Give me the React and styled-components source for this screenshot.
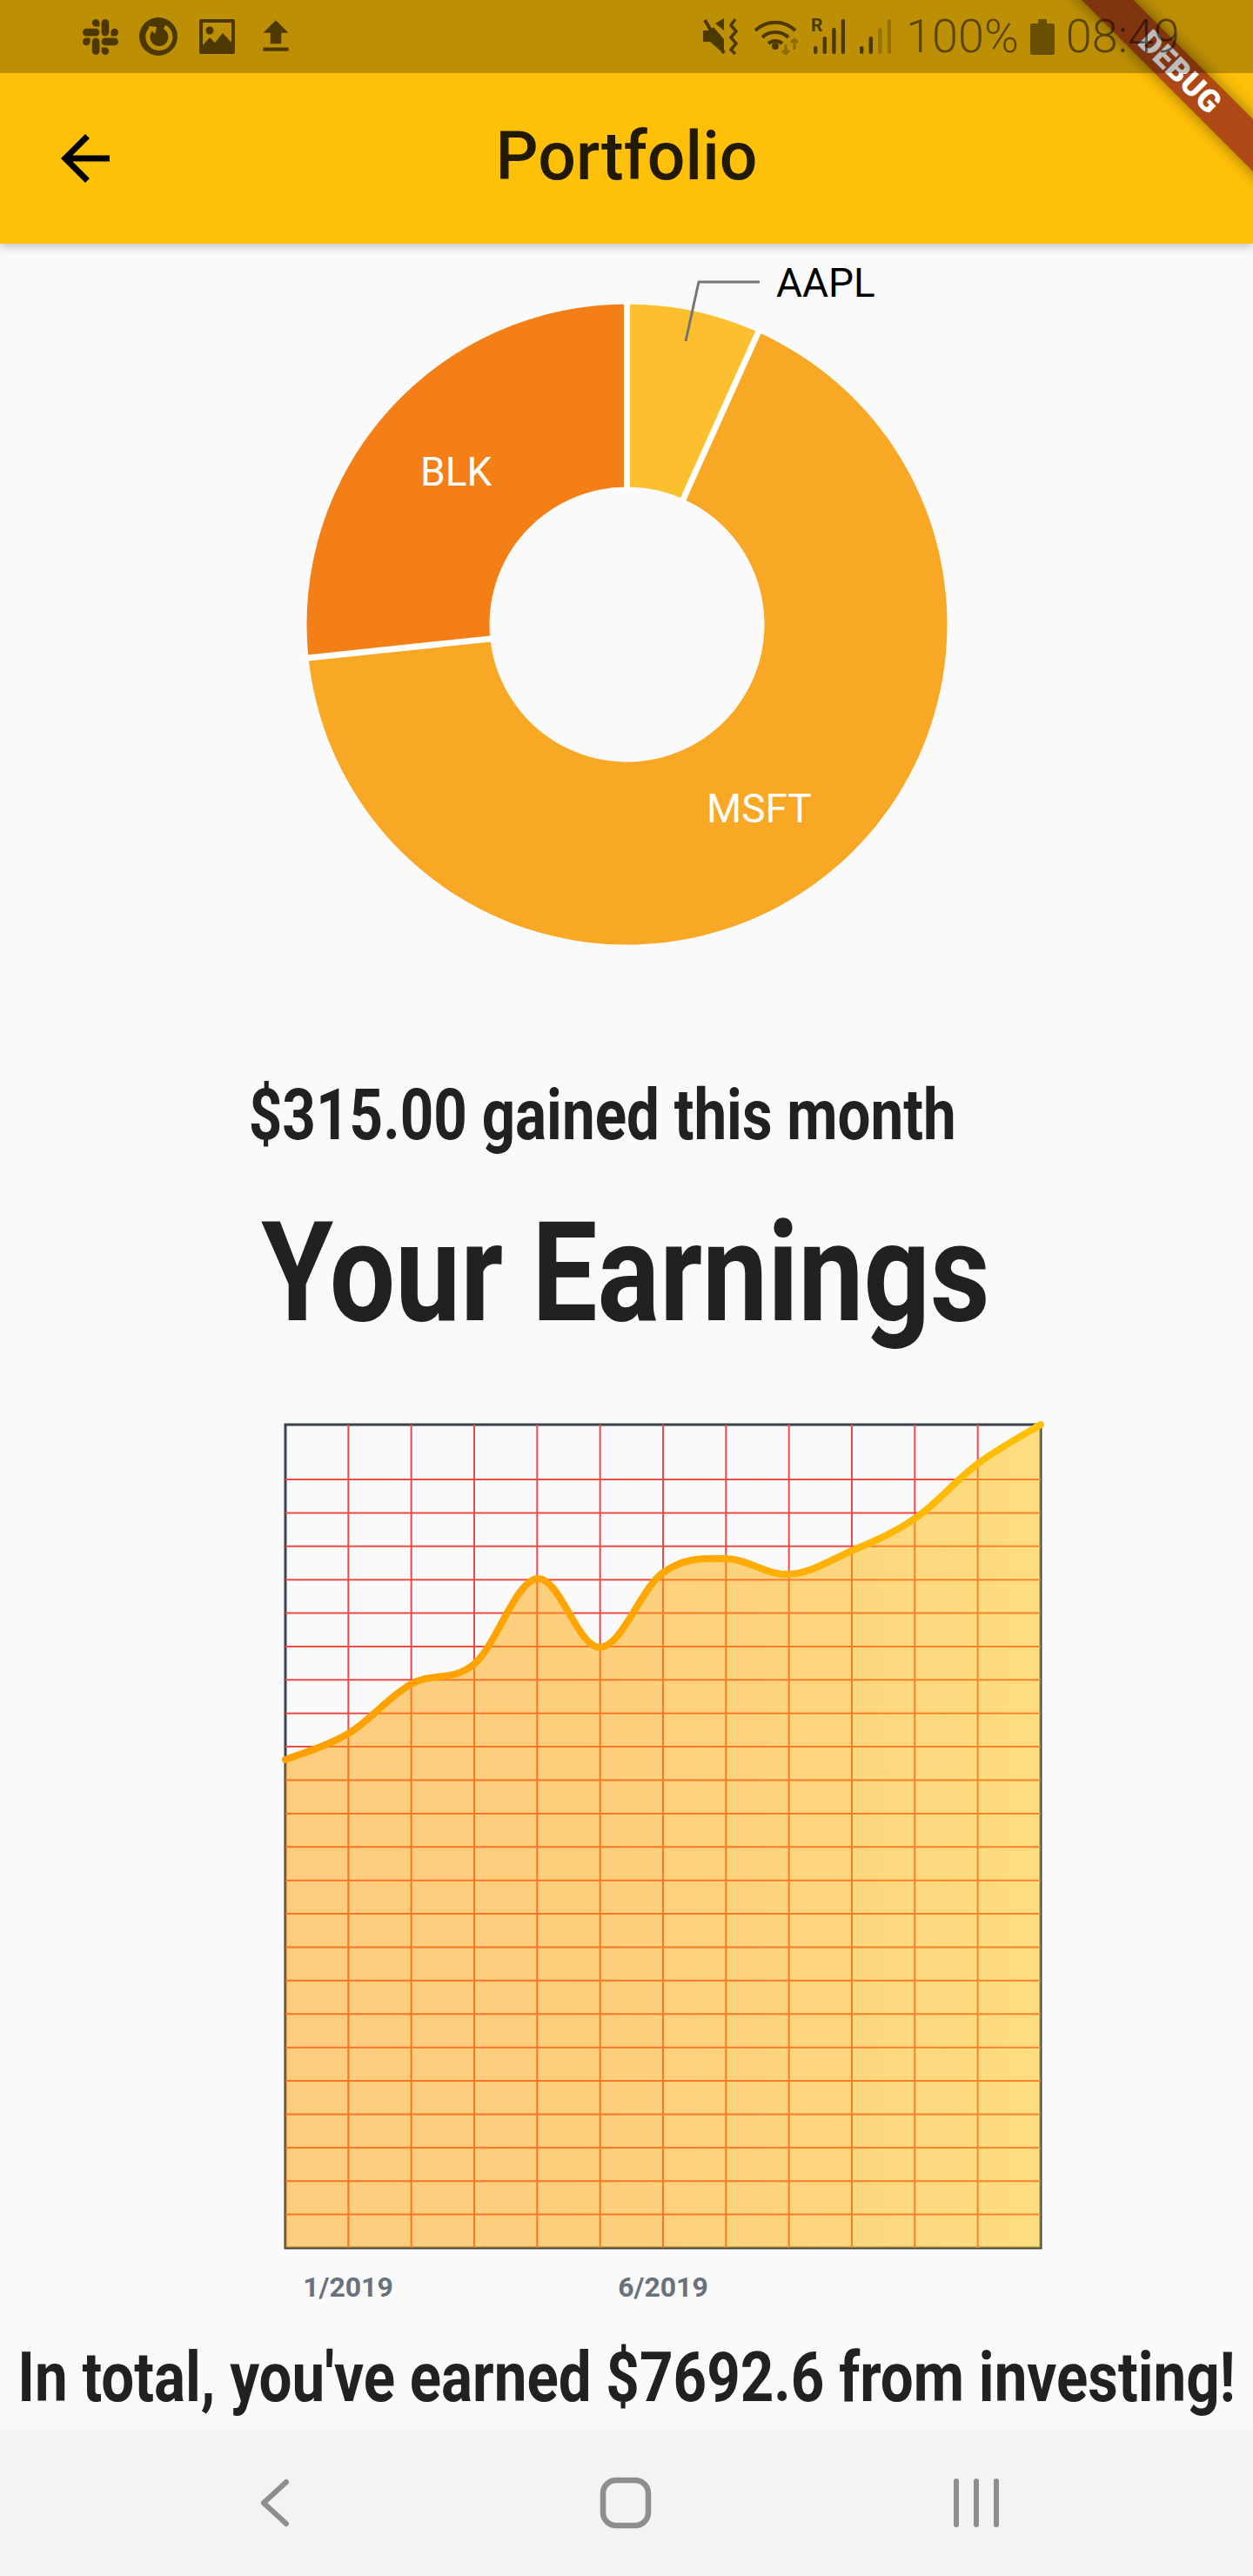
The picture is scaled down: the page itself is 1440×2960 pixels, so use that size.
import React from 'react'
import styled, { createGlobalStyle } from 'styled-components'
import { MdArrowBack, MdFileUpload } from 'react-icons/md'
import { SiSlack } from 'react-icons/si'

const GlobalStyle = createGlobalStyle`
  html, body {
    margin: 0;
    padding: 0;
    background: #fafafa;
    font-family: Roboto, "Liberation Sans", sans-serif;
  }
`

const Page = styled.div`
  position: relative;
  width: 1440px;
  height: 2960px;
  display: flex;
  flex-direction: column;
  overflow: hidden;
  background: #fafafa;
`

const Header = styled.header`
  position: relative;
  z-index: 2;
  height: 280px;
  flex: none;
  background: #ffc107;
  box-shadow: 0 4px 10px rgba(0, 0, 0, 0.22);
  overflow: hidden;
`

const DebugBanner = styled.div`
  position: absolute;
  left: 1106px;
  top: 62px;
  width: 500px;
  height: 42px;
  transform: rotate(45deg);
  background: rgba(140, 20, 25, 0.7);
  box-shadow: 0 0 18px rgba(0, 0, 0, 0.45);
  display: flex;
  justify-content: center;
  align-items: center;
  color: #fff;
  font-weight: 900;
  font-size: 36px;
  line-height: 42px;
  letter-spacing: 0.5px;
`

const StatusBar = styled.div`
  position: relative;
  z-index: 1;
  height: 84px;
  padding: 0 84px 0 95px;
  box-sizing: border-box;
  display: flex;
  align-items: center;
  justify-content: space-between;
  background: rgba(0, 0, 0, 0.26);
  color: #4d3900;
`

const StatusGroup = styled.div`
  display: flex;
  align-items: center;
`

const StatusSlot = styled.span`
  display: flex;
  margin-left: ${(p) => p.$gap || 0}px;
`

const StatusText = styled.span`
  margin-left: ${(p) => p.$gap || 0}px;
  font-size: 54px;
  font-weight: 300;
  line-height: 84px;
  color: rgba(0, 0, 0, 0.52);
  white-space: nowrap;
`

const Toolbar = styled.div`
  position: relative;
  z-index: 0;
  height: 196px;
  display: flex;
  align-items: center;
  padding-left: 56px;
`

const BackIcon = styled(MdArrowBack)`
  flex: none;
  color: #000;
`

const ToolbarTitle = styled.h1`
  flex: 1;
  margin: 0 0 4px;
  padding-right: 140px;
  text-align: center;
  font-size: 77px;
  font-weight: 500;
  line-height: 90px;
  color: rgba(0, 0, 0, 0.87);
`

const Main = styled.main`
  flex: 1;
  display: flex;
  flex-direction: column;
  align-items: center;
`

const PieChart = styled.svg`
  display: block;
  flex: none;
`

const PieLabel = styled.text`
  font-family: Roboto, sans-serif;
  font-size: 46px;
  fill: ${(p) => p.$color};
`

const Gained = styled.div`
  margin-right: 56px;
  font-size: 81px;
  font-weight: 700;
  line-height: 100px;
  color: #212121;
  white-space: nowrap;
  transform: scaleX(0.831);
`

const Earnings = styled.div`
  margin-top: 36px;
  margin-right: 2px;
  font-size: 160px;
  font-weight: 700;
  line-height: 190px;
  color: #212121;
  white-space: nowrap;
  transform: scaleX(0.836);
`

const ChartWrap = styled.div`
  margin-top: 72px;
  align-self: flex-start;
  margin-left: 320px;
`

const LineChart = styled.svg`
  display: block;
`

const AxisLabel = styled.text`
  font-family: Roboto, sans-serif;
  font-size: 32px;
  font-weight: 700;
  fill: #67727d;
  text-anchor: middle;
`

const Total = styled.div`
  margin-top: 32px;
  font-size: 80px;
  font-weight: 700;
  line-height: 100px;
  color: #212121;
  white-space: nowrap;
  transform: scaleX(0.841);
`

const NavBar = styled.nav`
  height: 168px;
  flex: none;
  background: #f3f3f3;
  display: flex;
  justify-content: center;
  align-items: center;
  gap: 343px;
  padding-right: 2px;
  color: #8e8e8e;
`

const polar = (r, deg) => {
  const a = ((deg - 90) * Math.PI) / 180
  return [720.5 + r * Math.cos(a), 717.5 + r * Math.sin(a)]
}

const segment = (from, to, R = 368, r = 158) => {
  const large = to - from > 180 ? 1 : 0
  const [x1, y1] = polar(R, from)
  const [x2, y2] = polar(R, to)
  const [x3, y3] = polar(r, to)
  const [x4, y4] = polar(r, from)
  return `M${x1} ${y1}A${R} ${R} 0 ${large} 1 ${x2} ${y2}L${x3} ${y3}A${r} ${r} 0 ${large} 0 ${x4} ${y4}Z`
}

const slices = [
  { from: 0, to: 24.2, color: '#fcc02e' },
  { from: 24.2, to: 264, color: '#f9a825' },
  { from: 264, to: 360, color: '#f57f17' },
]

const Portfolio = () => (
  <PieChart width="1440" height="952" viewBox="0 280 1440 952">
    {slices.map((s) => (
      <path key={s.from} d={segment(s.from, s.to)} fill={s.color} />
    ))}
    {[0, 24.2, 264].map((deg) => {
      const [x1, y1] = polar(155, deg)
      const [x2, y2] = polar(371, deg)
      return <line key={deg} x1={x1} y1={y1} x2={x2} y2={y2} stroke="#fff" strokeWidth="7" />
    })}
    <path d="M788 392L803 324H873" fill="none" stroke="#757575" strokeWidth="3" />
    <PieLabel x="892" y="341" $color="#000">AAPL</PieLabel>
    <PieLabel x="483" y="558" $color="#fff">BLK</PieLabel>
    <PieLabel x="812" y="945" $color="#fff">MSFT</PieLabel>
  </PieChart>
)

const X0 = 328
const X1 = 1196
const Y0 = 1637
const Y1 = 2583
const values = [2022, 1992, 1935, 1912, 1814, 1893, 1807, 1791, 1809, 1782, 1745, 1682, 1637]
const points = values.map((y, i) => [X0 + ((X1 - X0) * i) / 12, y])

const smoothPath = (pts, k = 0.35) => {
  let d = `M${pts[0][0]} ${pts[0][1]}`
  for (let i = 1; i < pts.length; i++) {
    const prev2 = pts[Math.max(i - 2, 0)]
    const prev = pts[i - 1]
    const cur = pts[i]
    const next = pts[Math.min(i + 1, pts.length - 1)]
    const c1 = [prev[0] + ((cur[0] - prev2[0]) / 2) * k, prev[1] + ((cur[1] - prev2[1]) / 2) * k]
    const c2 = [cur[0] - ((next[0] - prev[0]) / 2) * k, cur[1] - ((next[1] - prev[1]) / 2) * k]
    d += `C${c1[0]} ${c1[1]} ${c2[0]} ${c2[1]} ${cur[0]} ${cur[1]}`
  }
  return d
}

const curve = smoothPath(points)

const Earned = () => (
  <LineChart width="880" height="1020" viewBox="320 1630 880 1020">
    <defs>
      <linearGradient id="lineGrad" gradientUnits="userSpaceOnUse" x1={X0} y1="0" x2={X1} y2="0">
        <stop offset="0" stopColor="#ffa000" />
        <stop offset="0.5" stopColor="#ffa600" />
        <stop offset="1" stopColor="#ffc107" />
      </linearGradient>
    </defs>
    <rect x={X0} y={Y0} width={X1 - X0} height={Y1 - Y0} fill="none" stroke="#37434d" strokeWidth="3" />
    {Array.from({ length: 11 }, (_, i) => {
      const x = X0 + ((X1 - X0) * (i + 1)) / 12
      return <line key={i} x1={x} y1={Y0} x2={x} y2={Y1} stroke="#ee4a48" strokeWidth="2" />
    })}
    {Array.from({ length: 23 }, (_, i) => {
      const y = 1700 + 38.39 * i
      return <line key={i} x1={X0} y1={y} x2={X1} y2={y} stroke="#ee4a48" strokeWidth="2" />
    })}
    <path d={`${curve}L${X1} ${Y1}L${X0} ${Y1}Z`} fill="url(#lineGrad)" fillOpacity="0.5" />
    <path d={curve} fill="none" stroke="url(#lineGrad)" strokeWidth="8" strokeLinecap="round" />
    <AxisLabel x="400" y="2639">1/2019</AxisLabel>
    <AxisLabel x="762" y="2639">6/2019</AxisLabel>
  </LineChart>
)

const CircleRefresh = () => (
  <svg width="44" height="44" viewBox="0 0 44 44">
    <circle cx="22" cy="22" r="22" fill="currentColor" />
    <path d="M14 13A13 13 0 1 0 29 11" fill="none" stroke="#bd8f02" strokeWidth="5" />
    <path d="M10 10L20 11L18 19Z" fill="#bd8f02" />
  </svg>
)

const ImageIcon = () => (
  <svg width="41" height="40" viewBox="0 0 41 40">
    <path
      fillRule="evenodd"
      fill="currentColor"
      d="M2 0H39A2 2 0 0 1 41 2V38A2 2 0 0 1 39 40H2A2 2 0 0 1 0 38V2A2 2 0 0 1 2 0ZM4 4V30L12 21L18 27L27 16L37 27V4Z"
    />
    <circle cx="12" cy="13" r="4.5" fill="currentColor" />
  </svg>
)

const MuteIcon = () => (
  <svg width="42" height="42" viewBox="0 0 42 42">
    <path d="M0 14H7L12 10L24 24V41L8 27H0Z" fill="currentColor" />
    <path d="M14 6L24 0V14Z" fill="currentColor" />
    <path d="M2 2L24 40" stroke="currentColor" strokeWidth="4" />
    <path
      d="M37 1L32 8L38 15L32 22L38 29L32 36L37 41"
      fill="none"
      stroke="currentColor"
      strokeWidth="3.5"
      strokeLinejoin="round"
    />
  </svg>
)

const WifiIcon = () => (
  <svg width="50" height="42" viewBox="0 0 50 42">
    <path d="M1 14A33 33 0 0 1 47 14" fill="none" stroke="currentColor" strokeWidth="4" />
    <path d="M9 22A22 22 0 0 1 39 22" fill="none" stroke="currentColor" strokeWidth="4" />
    <path d="M16 29A12 12 0 0 1 32 29" fill="none" stroke="currentColor" strokeWidth="4" />
    <circle cx="24" cy="32" r="4" fill="currentColor" />
    <path d="M36 30V41M32 37L36 41L40 37" fill="none" stroke="#8f6c02" strokeWidth="3" />
    <path d="M46 36V24M42 28L46 24L50 28" fill="none" stroke="#8f6c02" strokeWidth="3" />
  </svg>
)

const RBars = styled.svg`
  display: block;
`

const BarLetter = styled.text`
  font-family: Roboto, sans-serif;
  font-size: 21px;
  font-weight: 700;
  fill: currentColor;
`

const SignalIcon = ({ width, label, faded }) => (
  <RBars width={width} height="50" viewBox={`0 -4 ${width} 50`}>
    {label && <BarLetter x="0" y="15">R</BarLetter>}
    {[9, 20, 30, 40].map((h, i) => (
      <rect
        key={h}
        x={width - 36 + i * 10.6}
        y={41 - h}
        width="4.4"
        height={h}
        rx="2"
        fill="currentColor"
        opacity={faded && i > 1 ? 0.35 : 1}
      />
    ))}
  </RBars>
)

const BatteryIcon = () => (
  <svg width="28" height="41" viewBox="0 0 28 41">
    <path
      d="M2 5H9V1A1 1 0 0 1 10 0H18A1 1 0 0 1 19 1V5H26A2 2 0 0 1 28 7V39A2 2 0 0 1 26 41H2A2 2 0 0 1 0 39V7A2 2 0 0 1 2 5Z"
      fill="currentColor"
      opacity="0.75"
    />
  </svg>
)

const NavBack = () => (
  <svg width="60" height="60" viewBox="0 0 60 60">
    <path d="M43 6L17 30L43 54" fill="none" stroke="currentColor" strokeWidth="6" strokeLinecap="round" strokeLinejoin="round" />
  </svg>
)

const NavHome = () => (
  <svg width="60" height="60" viewBox="0 0 60 60">
    <rect x="4" y="4" width="52" height="52" rx="15" fill="none" stroke="currentColor" strokeWidth="6.5" />
  </svg>
)

const NavRecents = () => (
  <svg width="60" height="60" viewBox="0 0 60 60">
    <path d="M7 5V55M30 5V55M53 5V55" stroke="currentColor" strokeWidth="6" strokeLinecap="round" />
  </svg>
)

const App = () => (
  <Page>
    <GlobalStyle />
    <Header>
      <DebugBanner>DEBUG</DebugBanner>
      <StatusBar>
        <StatusGroup>
          <SiSlack size={41} />
          <StatusSlot $gap={24}><CircleRefresh /></StatusSlot>
          <StatusSlot $gap={25}><ImageIcon /></StatusSlot>
          <StatusSlot $gap={22}><MdFileUpload size={50} /></StatusSlot>
        </StatusGroup>
        <StatusGroup>
          <MuteIcon />
          <StatusSlot $gap={17}><WifiIcon /></StatusSlot>
          <StatusSlot $gap={15}><SignalIcon width={39} label /></StatusSlot>
          <StatusSlot $gap={17}><SignalIcon width={36} faded /></StatusSlot>
          <StatusText $gap={17}>100%</StatusText>
          <StatusSlot $gap={13}><BatteryIcon /></StatusSlot>
          <StatusText $gap={13}>08:49</StatusText>
        </StatusGroup>
      </StatusBar>
      <Toolbar>
        <BackIcon size={84} />
        <ToolbarTitle>Portfolio</ToolbarTitle>
      </Toolbar>
    </Header>
    <Main>
      <Portfolio />
      <Gained>$315.00 gained this month</Gained>
      <Earnings>Your Earnings</Earnings>
      <ChartWrap>
        <Earned />
      </ChartWrap>
      <Total>In total, you've earned $7692.6 from investing!</Total>
    </Main>
    <NavBar>
      <NavBack />
      <NavHome />
      <NavRecents />
    </NavBar>
  </Page>
)

export default App
